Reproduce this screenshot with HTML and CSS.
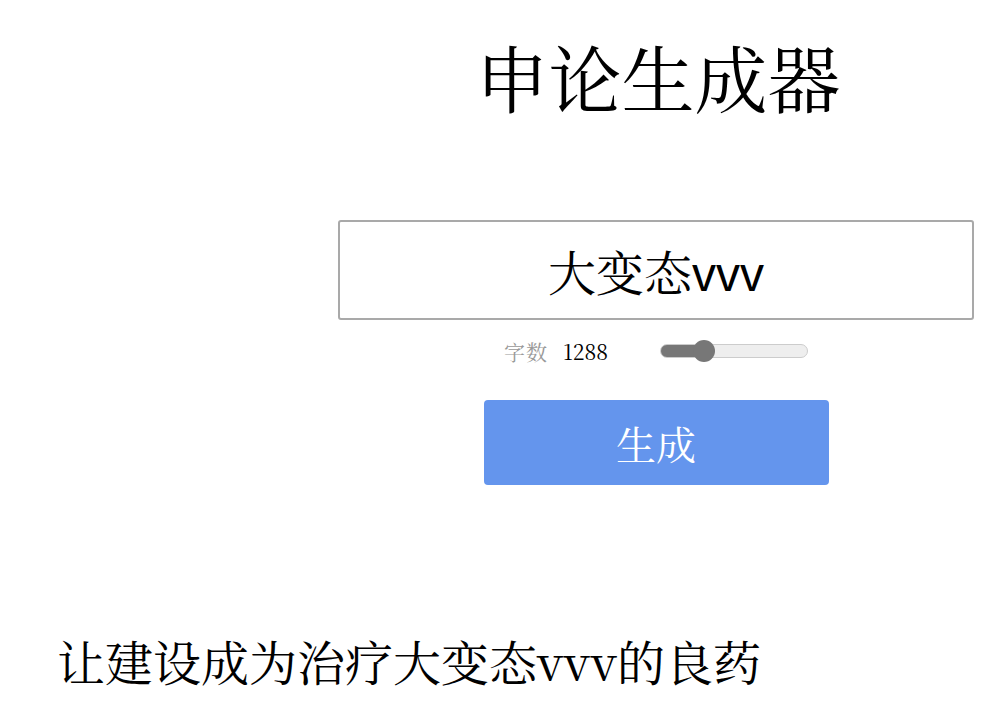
FILE: index.html
```html
<!DOCTYPE html>
<html lang="zh-CN">
<head>
    <meta charset="UTF-8" />
    <meta name="viewport" content="width=device-width, initial-scale=1.0" />
    <title>申论生成器</title>
    <link rel="stylesheet" href="styles.css">
</head>
<body>
    <div class="container">
        <h1 class="title">申论生成器</h1>

        <input type="text" class="topic-input" value="大变态vvv">

        <div class="length-row">
            <span class="length-label">字数</span>
            <span class="length-value">1288</span>
            <input type="range" class="length-slider" min="0" max="5000" value="1288">
        </div>

        <button class="generate-button">生成</button>
    </div>

    <div class="result">
        <p class="result-title">让建设成为治疗大变态vvv的良药</p>
    </div>
</body>
</html>
```

FILE: styles.css
```css
:root {
    --serif: "Noto Serif CJK SC", "Liberation Serif", "Noto Sans CJK SC", serif;
    --sans: "Liberation Sans", "Noto Serif CJK SC", "Noto Sans CJK SC", sans-serif;
}

* {
    margin: 0;
    padding: 0;
    box-sizing: border-box;
}

body {
    font-family: var(--serif);
    background-color: white;
    color: black;
}

.container {
    margin-left: 304px;
    display: flex;
    flex-direction: column;
    align-items: center;
    padding-top: 31px;
}

.title {
    font-size: 73px;
    font-weight: normal;
    line-height: 90px;
    margin-left: 4px;
}

.topic-input {
    margin-top: 99px;
    width: 636px;
    height: 100px;
    border: 2px solid #a9a9a9;
    border-radius: 3px;
    text-align: center;
    font-size: 48px;
    font-family: var(--sans);
    color: black;
    outline: none;
}

.length-row {
    display: flex;
    align-items: center;
    height: 40px;
    margin-top: 11px;
}

.length-label {
    color: #999;
    font-size: 21px;
    letter-spacing: 1px;
}

.length-value {
    font-size: 21px;
    margin-left: 15px;
}

.length-slider {
    -webkit-appearance: none;
    appearance: none;
    width: 148px;
    height: 14px;
    margin-left: 52px;
    border: 1px solid #ccc;
    border-radius: 7px;
    background: linear-gradient(to right, #777 0, #777 29%, #eee 29%, #eee 100%);
    outline: none;
}

.length-slider::-webkit-slider-thumb {
    -webkit-appearance: none;
    width: 22px;
    height: 22px;
    border-radius: 50%;
    background: #777;
    border: none;
}

.generate-button {
    margin-top: 29px;
    width: 345px;
    height: 85px;
    background-color: #6495ed;
    color: white;
    border: none;
    border-radius: 4px;
    font-family: var(--serif);
    font-size: 40px;
}

.result {
    padding: 144px 0 0 57px;
}

.result-title {
    font-size: 48px;
    line-height: 64px;
}
```
